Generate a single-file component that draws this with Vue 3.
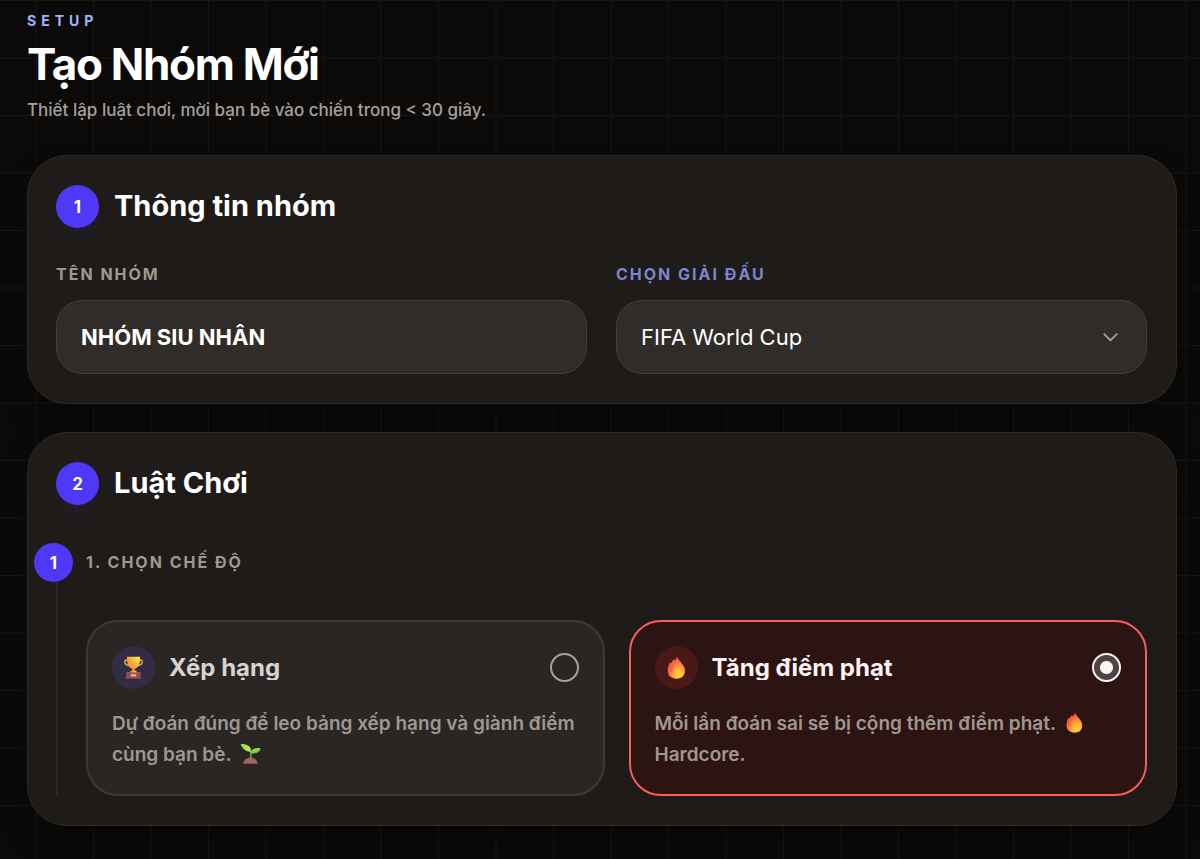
<script setup>
import { ref } from 'vue'

const groupName = ref('NHÓM SIU NHÂN')
const league = ref('wc')
const mode = ref('penalty')
</script>

<template>
  <main class="page">
    <svg class="defs" width="0" height="0" aria-hidden="true">
      <defs>
        <linearGradient id="gold" x1="0" y1="1" x2="1" y2="0">
          <stop offset="0" stop-color="#e8703a" />
          <stop offset="0.5" stop-color="#f7a93a" />
          <stop offset="1" stop-color="#fff04e" />
        </linearGradient>
        <radialGradient id="flame" cx="0.66" cy="0.82" r="0.8">
          <stop offset="0" stop-color="#ffd92e" />
          <stop offset="0.3" stop-color="#ffb638" />
          <stop offset="0.6" stop-color="#fb8340" />
          <stop offset="1" stop-color="#f2463f" />
        </radialGradient>
        <linearGradient id="leaf" x1="0" y1="0" x2="1" y2="1">
          <stop offset="0" stop-color="#7ee04a" />
          <stop offset="0.5" stop-color="#b5ea4e" />
          <stop offset="1" stop-color="#54b04a" />
        </linearGradient>
        <symbol id="i-flame" viewBox="0 0 32 32">
          <path fill="url(#flame)" d="M16.500 0.500C17.500 4.500 22 8 25.500 13C30 20 28.500 31.500 16.500 31.500C5.500 31.500 3 24 4 18C4.600 14 5.300 11 7 9C7.800 9 8.300 9.300 8.800 9.800C9.600 7.500 10.600 5.800 12 4.800C12.700 5.200 13.100 5.700 13.500 6.400C15.300 5 16.200 2.800 16.500 0.500Z" />
          <path fill="none" stroke="#e9583f" stroke-width="1.200" stroke-linecap="round" d="M8.800 10C8.600 13 6.300 16 6.800 21M13.500 7C12.500 11 8.500 15 9.500 22" />
        </symbol>
        <symbol id="i-trophy" viewBox="0 0 32 32">
          <path fill="none" stroke="#e9b844" stroke-width="2" d="M8 6.500C5 4.500 3.500 6 4 9C4.600 12 7 13.500 11 13.500M24 6.500C27 4.500 28.500 6 28 9C27.400 12 25 13.500 21 13.500" />
          <path fill="url(#gold)" d="M7 1H25C25.500 10 23 16.500 17.600 17.800L17.800 20C20 20.500 21 21.500 21 23H11C11 21.500 12 20.500 14.200 20L14.400 17.800C9 16.500 6.500 10 7 1Z" />
          <path fill="#8d4b63" d="M6.500 22.500H25.500L27 31.500H5Z" />
          <path fill="#a5566e" d="M6.500 22.500H25.500L25.800 24.500H6.200Z" />
          <path fill="url(#gold)" d="M12.500 21.500H19.500L20.500 23H11.500Z" />
          <rect x="12" y="25.500" width="8" height="3" rx="1" fill="#f3bd52" />
        </symbol>
        <symbol id="i-sprout" viewBox="0 0 32 32">
          <path fill="#a2665f" d="M5 31.500C5.500 26 10 22.500 16 22.500C22 22.500 26.500 26 27 31.500Z" />
          <path fill="none" stroke="#5fbd4c" stroke-width="2.200" d="M16.500 24V12" />
          <path fill="url(#leaf)" d="M17 13.500C17.500 5 11 1 1 1.500C3 8.500 9 13 17 13.500ZM16.500 15.500C17 9.500 22 7 31.500 8C30.500 14 24 17 16.500 15.500Z" />
        </symbol>
      </defs>
    </svg>

    <header class="head">
      <p class="eyebrow">SETUP</p>
      <h1>Tạo Nhóm Mới</h1>
      <p class="lead">Thiết lập luật chơi, mời bạn bè vào chiến trong &lt; 30 giây.</p>
    </header>

    <section class="card">
      <div class="card-head">
        <span class="badge">1</span>
        <h2>Thông tin nhóm</h2>
      </div>
      <div class="fields">
        <div class="field">
          <label for="group-name">TÊN NHÓM</label>
          <input id="group-name" v-model="groupName" class="control name" type="text" />
        </div>
        <div class="field">
          <label for="league" class="accent">CHỌN GIẢI ĐẤU</label>
          <div class="select-wrap">
            <select id="league" v-model="league" class="control">
              <option value="wc">FIFA World Cup</option>
            </select>
            <svg class="chevron" viewBox="0 0 24 24" aria-hidden="true">
              <path d="M5.500 8.500l6.500 6.500 6.500-6.500" />
            </svg>
          </div>
        </div>
      </div>
    </section>

    <section class="card">
      <div class="card-head">
        <span class="badge">2</span>
        <h2>Luật Chơi</h2>
      </div>
      <div class="step">
        <span class="badge step-badge">1</span>
        <h3 id="mode-label">1. CHỌN CHẾ ĐỘ</h3>
        <div class="options" role="radiogroup" aria-labelledby="mode-label">
          <label class="option" :class="{ hot: mode === 'rank' }">
            <span class="option-head">
              <span class="icon rank"><svg aria-hidden="true"><use href="#i-trophy" /></svg></span>
              <span class="option-title">Xếp hạng</span>
              <input v-model="mode" type="radio" name="mode" value="rank" />
            </span>
            <span class="desc">Dự đoán đúng để leo bảng xếp hạng và giành điểm cùng bạn bè. <svg class="emoji" aria-hidden="true"><use href="#i-sprout" /></svg></span>
          </label>
          <label class="option" :class="{ hot: mode === 'penalty' }">
            <span class="option-head">
              <span class="icon penalty"><svg aria-hidden="true"><use href="#i-flame" /></svg></span>
              <span class="option-title">Tăng điểm phạt</span>
              <input v-model="mode" type="radio" name="mode" value="penalty" />
            </span>
            <span class="desc">Mỗi lần đoán sai sẽ bị cộng thêm điểm phạt. <svg class="emoji" aria-hidden="true"><use href="#i-flame" /></svg> Hardcore.</span>
          </label>
        </div>
      </div>
    </section>
  </main>
</template>

<style>
body {
  background: #0c0a09;
}
</style>

<style scoped>
* {
  box-sizing: border-box;
}

.page {
  min-height: 100vh;
  padding: 12px 23px 33px 27px;
  font-family: Inter, "Noto Sans", sans-serif;
  color: #fff;
  background-color: #0b0a08;
  background-image:
    linear-gradient(90deg, transparent 93px, #171615 93px, #171615 94px, transparent 94px),
    linear-gradient(90deg, transparent 35px, #11100f 35px, #11100f 37px, transparent 37px),
    linear-gradient(#171615 1px, transparent 1px),
    linear-gradient(transparent 57px, #11100f 57px, #11100f 59px, transparent 59px);
  background-size: 115px 115px;
}

.defs {
  position: absolute;
}

h1, h2, h3, p {
  margin: 0;
}

.head {
  margin-bottom: 32px;
}

.eyebrow {
  font-size: 14px;
  line-height: 18px;
  font-weight: 700;
  letter-spacing: 5px;
  color: #a3b3ff;
}

h1 {
  margin-top: 6px;
  font-size: 44px;
  line-height: 56px;
  font-weight: 700;
  letter-spacing: -0.03em;
}

.lead {
  margin-top: 5px;
  font-size: 17px;
  line-height: 26px;
  font-weight: 500;
  color: #a8a09b;
}

.card {
  padding: 29px 29px 29px 28px;
  border: 1px solid #2d2b29;
  border-radius: 40px;
  background: #1e1b18;
  box-shadow: 0 16px 36px -8px rgba(0, 0, 0, 0.4);
}

.card + .card {
  margin-top: 28px;
}

.card-head {
  display: flex;
  align-items: center;
  gap: 15px;
}

.badge {
  display: flex;
  flex: none;
  align-items: center;
  justify-content: center;
  width: 43px;
  height: 43px;
  border-radius: 50%;
  background: #4f39f6;
  box-shadow: 0 12px 16px -4px rgba(79, 57, 246, 0.1);
  font-size: 17px;
  font-weight: 700;
}

h2 {
  padding-bottom: 2px;
  font-size: 29px;
  line-height: 38px;
  font-weight: 700;
}

.fields {
  display: grid;
  grid-template-columns: 1fr 1fr;
  gap: 29px;
  margin-top: 34px;
}

.field label,
h3 {
  display: block;
  font-size: 16px;
  line-height: 24px;
  font-weight: 700;
  letter-spacing: 2px;
  color: #a09890;
}

.field .accent {
  color: #7c86d0;
}

.control {
  display: block;
  width: 100%;
  height: 74px;
  padding: 0 24px;
  border: 1px solid #423e3b;
  border-radius: 26px;
  outline: none;
  appearance: none;
  background: #302c29;
  color: #fff;
  font-family: inherit;
  font-size: 22px;
  font-weight: 400;
}

.name {
  font-weight: 700;
}

.field label {
  margin-bottom: 14px;
}

.select-wrap {
  position: relative;
}

.chevron {
  position: absolute;
  top: 26px;
  right: 25px;
  width: 23px;
  height: 23px;
  fill: none;
  stroke: #a8a09b;
  stroke-width: 2;
  stroke-linecap: round;
  stroke-linejoin: round;
  pointer-events: none;
}

.step {
  position: relative;
  margin-top: 45px;
  padding-left: 28px;
  border-left: 2px solid #2b2826;
}

.step-badge {
  position: absolute;
  top: -7px;
  left: -24px;
  width: 39px;
  height: 39px;
  box-shadow: none;
}

.options {
  display: grid;
  grid-template-columns: 1fr 1fr;
  gap: 24px;
  margin-top: 46px;
}

.option {
  padding: 24px;
  border: 2px solid #3c3937;
  border-radius: 32px;
  background: #292624;
  color: #d6d3d1;
}

.option.hot {
  border-color: #f85d60;
  background: #2b1412;
  color: #fef2f2;
}

.option-head {
  display: flex;
  align-items: center;
}

.icon {
  display: flex;
  align-items: center;
  justify-content: center;
  width: 43px;
  height: 43px;
  margin-right: 14px;
  border-radius: 50%;
}

.icon svg {
  width: 23px;
  height: 23px;
}

.rank {
  background: #322d45;
}

.penalty {
  background: #4a1817;
}

.option-title {
  flex: 1;
  overflow: hidden;
  font-size: 24px;
  line-height: 25px;
  font-weight: 700;
}

.option input {
  appearance: none;
  width: 29px;
  height: 29px;
  margin: 0;
  border: 2px solid #a8a29e;
  border-radius: 50%;
}

.option input:checked {
  border-color: #fef2f2;
  background: radial-gradient(circle, #fef2f2 6px, #4b4645 7px);
}

.desc {
  display: block;
  margin-top: 19px;
  font-size: 19px;
  line-height: 31px;
  font-weight: 600;
  color: #a09890;
}

.emoji {
  width: 21px;
  height: 21px;
  margin: 0 4px;
  vertical-align: -3px;
}
</style>
